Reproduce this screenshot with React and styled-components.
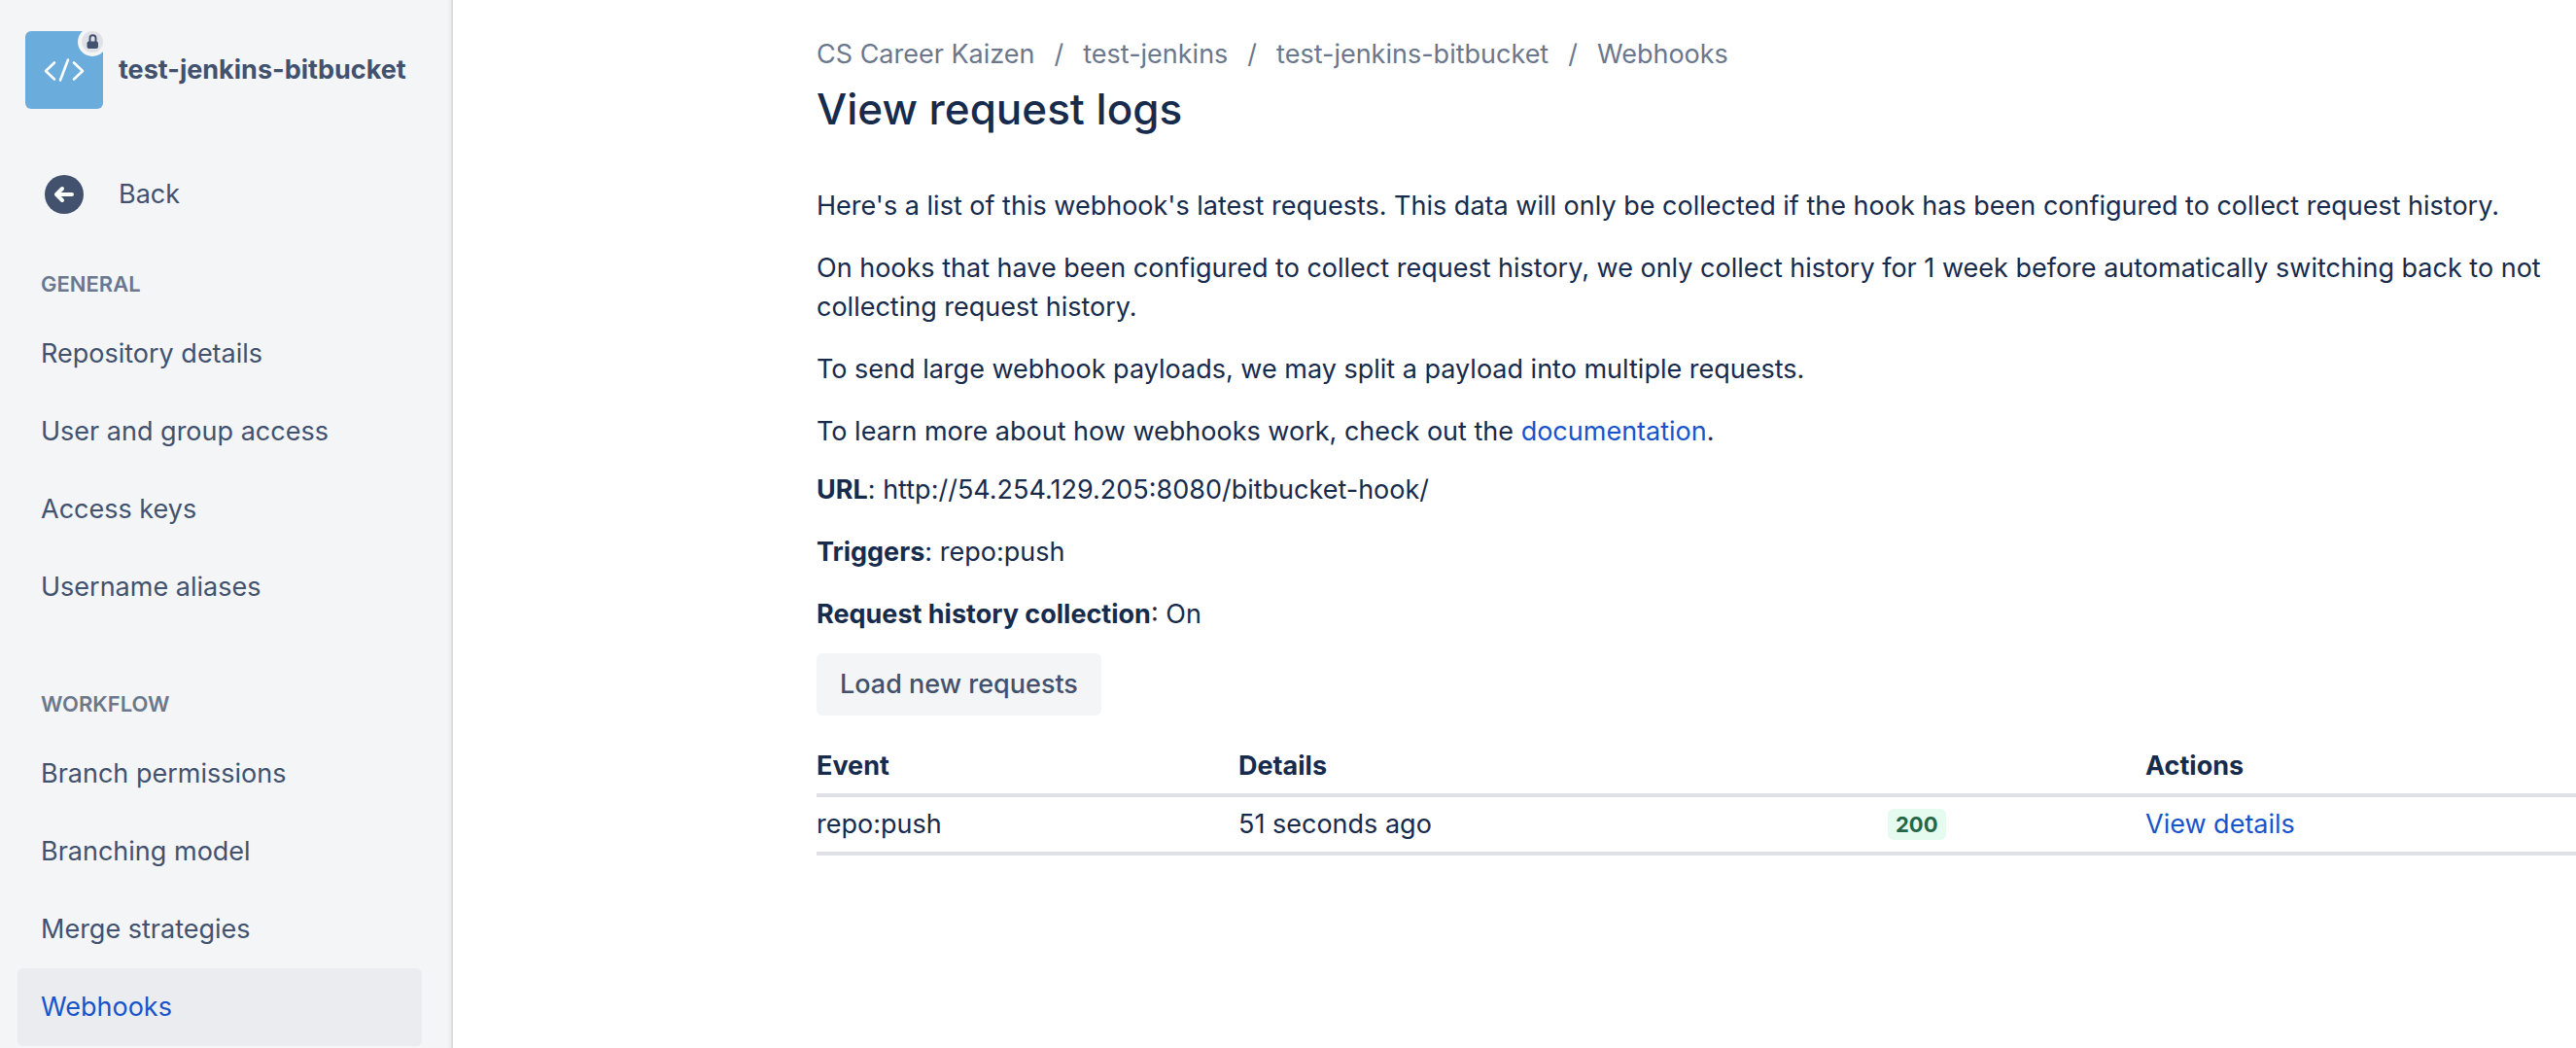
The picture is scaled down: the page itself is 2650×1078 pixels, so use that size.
import React from "react";
import styled, { createGlobalStyle } from "styled-components";

const GlobalStyle = createGlobalStyle`
  *, *::before, *::after { box-sizing: border-box; }
  body {
    margin: 0;
    background: #fff;
    color: #172b4d;
    font-family: Inter, "Liberation Sans", sans-serif;
    font-size: 27px;
    line-height: 40px;
  }
  h1, h2, p, ul, ol { margin: 0; padding: 0; }
  ul, ol { list-style: none; }
`;

const Page = styled.div`
  display: flex;
  min-height: 100vh;
`;

const Sidebar = styled.nav`
  flex: 0 0 466px;
  padding: 32px 30px 0 18px;
  background: linear-gradient(to left, #ebecee, #f4f5f7 4px);
  border-right: 2px solid #dddddd;
  color: #42526e;
`;

const RepoHeader = styled.div`
  display: flex;
  align-items: center;
  gap: 16px;
  height: 80px;
  margin-bottom: 48px;
  padding-left: 8px;
  font-weight: 700;
  white-space: nowrap;
`;

const Avatar = styled.svg`
  flex: none;
  width: 80px;
  height: 80px;
`;

const BackLink = styled.a`
  display: flex;
  align-items: center;
  gap: 36px;
  height: 80px;
  margin-bottom: 36px;
  padding-left: 28px;
  color: inherit;
  text-decoration: none;
`;

const Section = styled.section`
  & + & {
    margin-top: 64px;
  }
`;

const SectionTitle = styled.h2`
  margin-bottom: 16px;
  padding-left: 24px;
  color: #6b778c;
  font-size: 22px;
  font-weight: 600;
  line-height: 32px;
  text-transform: uppercase;
`;

const NavLink = styled.a`
  display: flex;
  align-items: center;
  height: 80px;
  padding: 0 24px;
  border-radius: 6px;
  background: ${(p) => (p.$active ? "#ebecf0" : "transparent")};
  color: ${(p) => (p.$active ? "#1754cb" : "inherit")};
  text-decoration: none;
`;

const Main = styled.main`
  flex: 1;
  min-width: 0;
  padding: 36px 0 0 374px;
`;

const Crumbs = styled.ol`
  display: flex;
  margin-bottom: 8px;
  color: #6b778c;

  li + li::before {
    content: "/";
    margin: 0 20px;
  }
`;

const CrumbLink = styled.a`
  color: inherit;
  text-decoration: none;
`;

const Title = styled.h1`
  margin-bottom: 52px;
  font-size: 44px;
  font-weight: 500;
  line-height: 56px;
`;

const Stack = styled.div`
  display: flex;
  flex-direction: column;
  gap: 24px;
  margin-bottom: 20px;
`;

const TextLink = styled.a`
  color: #1754cb;
  text-decoration: none;
`;

const Strong = styled.strong`
  font-weight: 700;
`;

const Button = styled.button`
  height: 64px;
  margin-bottom: 24px;
  padding: 0 24px;
  border: 0;
  border-radius: 6px;
  background: #f4f5f7;
  color: #42526e;
  font: inherit;
  font-weight: 500;
`;

const Table = styled.table`
  width: 100%;
  table-layout: fixed;
  border-collapse: separate;
  border-spacing: 0;
`;

const Col = styled.col`
  width: ${(p) => p.$width || "auto"};
`;

const Cell = styled.td`
  height: 60px;
  padding: 0;
  border-bottom: 4px solid #dfe1e6;
  font-weight: ${(p) => (p.as === "th" ? 700 : 400)};
  text-align: left;
  vertical-align: middle;
`;

const Lozenge = styled.span`
  display: block;
  width: fit-content;
  padding: 0 8px;
  border-radius: 6px;
  background: #e6fbf0;
  color: #256647;
  font-size: 22px;
  font-weight: 700;
  line-height: 32px;
`;

const sections = [
  {
    title: "General",
    items: ["Repository details", "User and group access", "Access keys", "Username aliases"],
  },
  {
    title: "Workflow",
    items: ["Branch permissions", "Branching model", "Merge strategies", "Webhooks"],
  },
];

const crumbs = ["CS Career Kaizen", "test-jenkins", "test-jenkins-bitbucket", "Webhooks"];

function RepoAvatar() {
  return (
    <Avatar viewBox="0 0 80 80" aria-hidden="true">
      <rect width="80" height="80" rx="6" fill="#6aaddc" />
      <g fill="none" stroke="#fff" strokeWidth="2.6" strokeLinecap="round" strokeLinejoin="round">
        <path d="M30 32.500 21 41l9 8.500M50 32.500 59 41l-9 8.500M44 29.500l-8 21" />
      </g>
      <circle cx="69" cy="11" r="15" fill="#f4f5f7" />
      <circle cx="69" cy="11" r="11" fill="#dfe1e6" />
      <path d="M66.500 12V7.200a3 3 0 0 1 6 0V12" fill="none" stroke="#42526e" strokeWidth="2" />
      <rect x="63.500" y="10.500" width="11.500" height="7.500" rx="2" fill="#42526e" />
    </Avatar>
  );
}

function BackIcon() {
  return (
    <svg width="40" height="40" viewBox="0 0 40 40" aria-hidden="true">
      <circle cx="20" cy="20" r="20" fill="#42526e" />
      <path
        d="M28 20H12.500M18 14l-6 6 6 6"
        fill="none"
        stroke="#fff"
        strokeWidth="4"
        strokeLinecap="round"
        strokeLinejoin="round"
      />
    </svg>
  );
}

export default function App() {
  return (
    <>
      <GlobalStyle />
      <Page>
        <Sidebar>
          <RepoHeader>
            <RepoAvatar />
            test-jenkins-bitbucket
          </RepoHeader>
          <BackLink href="#back">
            <BackIcon />
            Back
          </BackLink>
          {sections.map((section) => (
            <Section key={section.title}>
              <SectionTitle>{section.title}</SectionTitle>
              <ul>
                {section.items.map((item) => (
                  <li key={item}>
                    <NavLink href="#nav" $active={item === "Webhooks"}>
                      {item}
                    </NavLink>
                  </li>
                ))}
              </ul>
            </Section>
          ))}
        </Sidebar>
        <Main>
          <Crumbs>
            {crumbs.map((crumb) => (
              <li key={crumb}>
                <CrumbLink href="#crumb">{crumb}</CrumbLink>
              </li>
            ))}
          </Crumbs>
          <Title>View request logs</Title>
          <Stack>
            <p>
              Here's a list of this webhook's latest requests. This data will only be collected if
              the hook has been configured to collect request history.
            </p>
            <p>
              On hooks that have been configured to collect request history, we only collect history
              for 1 week before automatically switching back to not collecting request history.
            </p>
            <p>
              To send large webhook payloads, we may split a payload into multiple requests.
            </p>
            <p>
              To learn more about how webhooks work, check out the{" "}
              <TextLink href="#documentation">documentation</TextLink>.
            </p>
          </Stack>
          <Stack>
            <p>
              <Strong>URL</Strong>: http://54.254.129.205:8080/bitbucket-hook/
            </p>
            <p>
              <Strong>Triggers</Strong>: repo:push
            </p>
            <p>
              <Strong>Request history collection</Strong>: On
            </p>
          </Stack>
          <Button type="button">Load new requests</Button>
          <Table>
            <colgroup>
              <Col $width="434px" />
              <Col />
              <Col $width="265px" />
              <Col $width="443px" />
            </colgroup>
            <thead>
              <tr>
                <Cell as="th" scope="col">Event</Cell>
                <Cell as="th" scope="col" colSpan={2}>Details</Cell>
                <Cell as="th" scope="col">Actions</Cell>
              </tr>
            </thead>
            <tbody>
              <tr>
                <Cell>repo:push</Cell>
                <Cell>51 seconds ago</Cell>
                <Cell>
                  <Lozenge>200</Lozenge>
                </Cell>
                <Cell>
                  <TextLink href="#details">View details</TextLink>
                </Cell>
              </tr>
            </tbody>
          </Table>
        </Main>
      </Page>
    </>
  );
}
